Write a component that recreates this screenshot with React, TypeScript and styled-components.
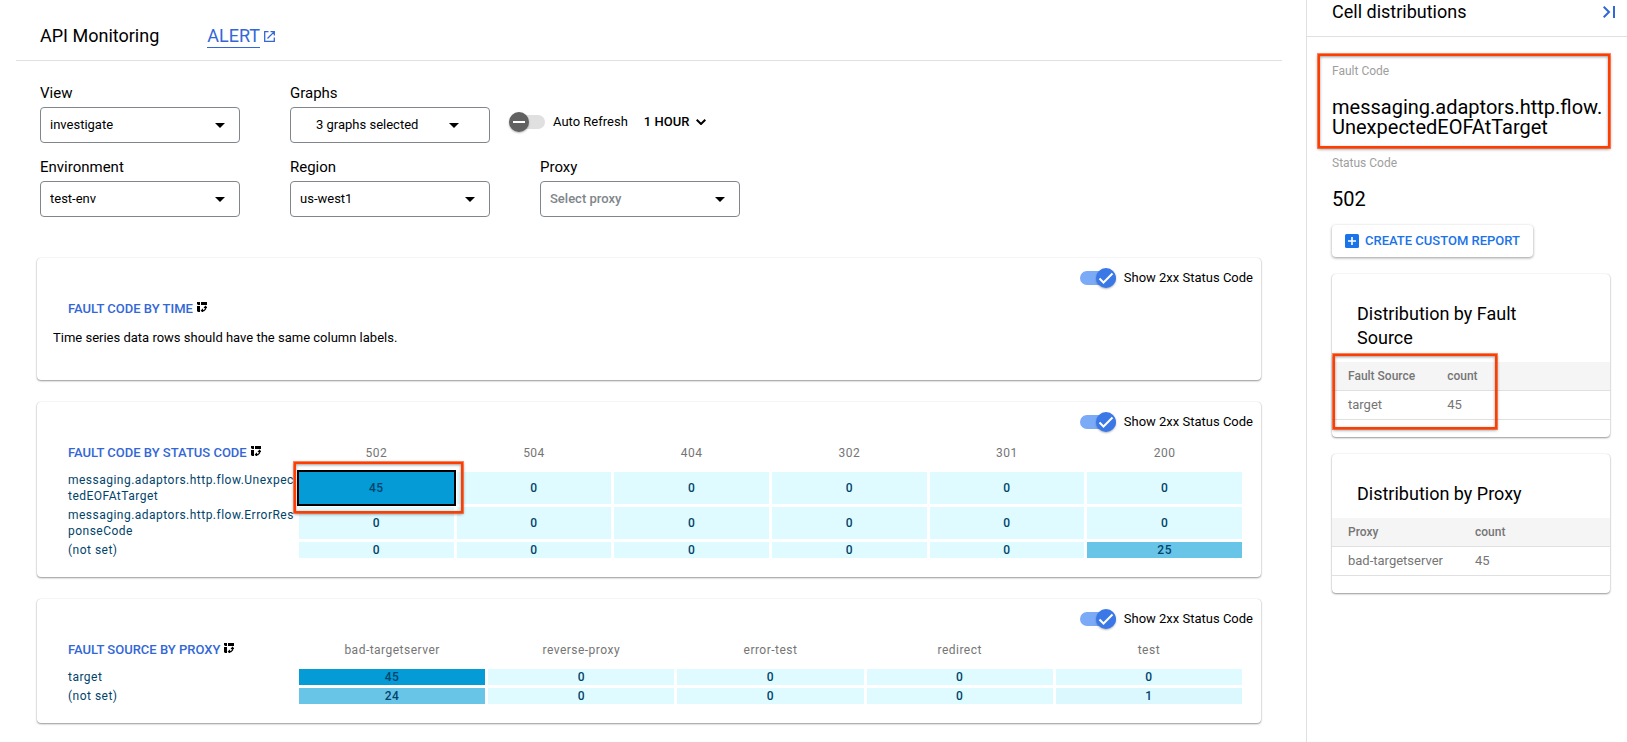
import React, { ReactNode, useId, useState } from "react";
import styled, { createGlobalStyle, css } from "styled-components";

const Global = createGlobalStyle`
  * { box-sizing: border-box; }
  body { margin: 0; background: #fff; color: #000; font: 13px/16px Roboto, sans-serif; }
  button, select, input { font: inherit; color: inherit; }
  table { border-collapse: separate; }
`;

const Page = styled.div`
  display: flex;
  min-height: 100vh;
`;

const Main = styled.main`
  flex: 1;
  min-width: 0;
`;

const Header = styled.header`
  display: flex;
  align-items: center;
  gap: 48px;
  height: 61px;
  margin: 0 24px 0 16px;
  padding: 12px 24px 0;
  border-bottom: 1px solid #e0e0e0;
`;

const Title = styled.h1`
  margin: 0;
  font-size: 18px;
  font-weight: 400;
  line-height: 24px;
`;

const AlertLink = styled.a`
  display: flex;
  align-items: center;
  gap: 4px;
  color: #3367d6;
  font-size: 18px;
  line-height: 22px;
  text-decoration: none;
  span { border-bottom: 1px solid currentColor; }
`;

const Filters = styled.form`
  display: grid;
  gap: 14px;
  padding: 22px 40px 0;
`;

const FilterRow = styled.div`
  display: flex;
  gap: 50px;
`;

const Field = styled.div`
  display: grid;
  width: 200px;
  label { font-size: 15px; line-height: 20px; padding-bottom: 4px; }
`;

const SelectBox = styled.div`
  display: grid;
  align-items: center;
  > * { grid-area: 1 / 1; }
  svg { justify-self: end; margin-right: 15px; pointer-events: none; }
`;

const Select = styled.select<{ $muted?: boolean; $inset?: boolean }>`
  appearance: none;
  width: 100%;
  height: 36px;
  padding: 0 ${(p) => (p.$inset ? 25 : 9)}px;
  border: 1px solid #80868b;
  border-radius: 4px;
  background: #fff;
  color: ${(p) => (p.$muted ? "#80868b" : "#000")};
  font-weight: ${(p) => (p.$muted ? 500 : 400)};
  ${(p) => p.$inset && css`& + svg { margin-right: 31px; }`}
`;

const Refresh = styled.div`
  display: flex;
  align-items: center;
  align-self: flex-end;
  height: 42px;
  margin-left: -31px;
  gap: 16px;
`;

const HourButton = styled.button`
  display: flex;
  align-items: center;
  gap: 7px;
  padding: 0;
  border: 0;
  background: none;
  font-weight: 500;
`;

const ToggleLabel = styled.label`
  display: flex;
  align-items: center;
  gap: 8px;
`;

const Track = styled.span<{ $on: boolean }>`
  position: relative;
  display: flex;
  align-items: center;
  justify-content: ${(p) => (p.$on ? "flex-end" : "flex-start")};
  width: 36px;
  height: 14px;
  border-radius: 7px;
  background: ${(p) => (p.$on ? "#7baaf7" : "#e0e0e0")};
  input { position: absolute; inset: 0; margin: 0; opacity: 0; }
`;

const Knob = styled.span<{ $on: boolean }>`
  display: grid;
  place-items: center;
  width: 20px;
  height: 20px;
  border-radius: 50%;
  background: ${(p) => (p.$on ? "#3b78e7" : "#616161")};
  box-shadow: 0 1px 2px rgba(0, 0, 0, 0.3);
`;

const Cards = styled.div`
  display: grid;
  gap: 22px;
  padding: 41px 45px 19px 37px;
`;

const Card = styled.section`
  border-radius: 4px;
  background: #fff;
  box-shadow: 0 1px 2px rgba(0, 0, 0, 0.4), 0 0 1px rgba(0, 0, 0, 0.2);
`;

const GraphCard = styled(Card)`
  padding-bottom: 16px;
`;

const CardBar = styled.div`
  display: flex;
  justify-content: flex-end;
  height: 32px;
  padding: 0 8px 4px;
  align-items: flex-end;
`;

const GraphLink = styled.button`
  display: flex;
  align-items: center;
  gap: 4px;
  height: 32px;
  padding: 0;
  border: 0;
  background: none;
  color: #3367d6;
  font-weight: 500;
  white-space: nowrap;
  svg { color: #000; margin-bottom: 4px; }
`;

const EmptyGraph = styled.div`
  padding: 3px 31px 4px;
`;

const Message = styled.p`
  margin: 5px -15px 14px;
`;

const HeatTable = styled.table`
  table-layout: fixed;
  width: calc(100% - 44px);
  margin: 0 16px 0 28px;
  border-spacing: 3px;
  font-size: 12px;
  letter-spacing: 0.04em;
  color: #01446b;
  th, td { padding: 0; }
  thead th { height: 32px; color: #757575; font-weight: 400; }
  thead th:first-child { width: 228px; letter-spacing: normal; font-size: 13px; }
  tbody th { text-align: left; font-weight: 400; overflow-wrap: anywhere; }
`;

const heat = { none: "#e0fbff", trace: "#daf8fd", mid: "#69c5e8", high: "#049bd6" };
type Heat = keyof typeof heat;

const HeatCell = styled.td<{ $heat: Heat; $selected?: boolean }>`
  position: relative;
  z-index: ${(p) => (p.$selected ? 1 : 0)};
  background: ${(p) => heat[p.$heat]};
  outline: ${(p) => (p.$selected ? "2px solid #000" : "none")};
  text-align: center;
  font-weight: 500;
`;

const Highlight = styled.span`
  position: absolute;
  border: 2px solid #ff3d00;
  outline: 1px solid rgba(255, 61, 0, 0.6);
  box-shadow: 0 1px 3px rgba(0, 0, 0, 0.5), inset 0 1px 3px rgba(0, 0, 0, 0.4);
  pointer-events: none;
`;

const CellHighlight = styled(Highlight)`
  inset: -10px -9px -9px -5px;
`;

const TableHighlight = styled(Highlight)`
  inset: -8px auto -9px 1px;
  width: 164px;
`;

const BlockHighlight = styled(Highlight)`
  inset: 1px 0 -3px -14px;
`;

const Side = styled.aside`
  width: 321px;
  border-left: 1px solid #e0e0e0;
`;

const SideHeader = styled.header`
  display: flex;
  justify-content: space-between;
  height: 37px;
  padding: 0 12px 0 25px;
  border-bottom: 1px solid #e0e0e0;
  h2 { margin: 0; font-size: 18px; line-height: 24px; font-weight: 400; }
`;

const IconButton = styled.button`
  display: grid;
  place-items: center;
  height: 24px;
  padding: 0;
  border: 0;
  background: none;
  color: #3367d6;
`;

const SideBody = styled.div`
  padding: 16px 17px 0 25px;
`;

const Fact = styled.dl`
  position: relative;
  margin: 0;
  dt { padding-top: 10px; color: #9e9e9e; font-size: 12px; }
  dd { margin: 0; padding: 18px 0 8px; font-size: 20px; line-height: 20px; overflow-wrap: break-word; }
`;

const ReportButton = styled.button`
  display: flex;
  align-items: center;
  gap: 6px;
  height: 32px;
  margin-top: 8px;
  padding: 0 13px;
  border: 0;
  border-radius: 4px;
  background: #fff;
  box-shadow: 0 1px 3px rgba(0, 0, 0, 0.4);
  color: #1a73e8;
  font-weight: 500;
`;

const DistCard = styled(Card)`
  margin-top: 17px;
  padding: 28px 0 17px;
  h3 { margin: 0 60px 12px 25px; font-size: 18px; line-height: 24px; font-weight: 400; }
`;

const TableFrame = styled.div`
  position: relative;
`;

const DistTable = styled.table`
  width: 100%;
  border-spacing: 0;
  color: #757575;
  th, td { height: 29px; padding: 0 16px; border-bottom: 1px solid #e0e0e0; text-align: left; white-space: nowrap; }
  th { background: #f5f5f5; font-size: 12px; font-weight: 500; }
  th:last-child { width: 100%; }
`;

const Caret = () => (
  <svg width="10" height="5" viewBox="0 0 10 5" fill="currentColor"><path d="M0 0h10L5 5z" /></svg>
);

const OpenIcon = () => (
  <svg width="11" height="11" viewBox="0 0 11 11" fill="none" stroke="currentColor" strokeWidth="1.3">
    <path d="M4.500 .7H.7v9.600h9.600V6.500M6.500 .7h3.800v3.800M10.100 .9L3.500 7.500" />
  </svg>
);

const PivotIcon = () => (
  <svg width="10" height="10" viewBox="0 0 10 10" fill="currentColor">
    <path d="M0 0h3v3H1L0 2zM4 0h6v3H4zM0 4h3v6H1L0 9z" />
    <path d="M4.200 8.600H7L8.600 7V4.300M6 7L4.400 8.600 6 10M7 6l1.600-1.600L10 6" fill="none" stroke="currentColor" strokeWidth="1.100" />
  </svg>
);

function Toggle({ label, initial }: { label: string; initial: boolean }) {
  const [on, setOn] = useState(initial);
  return (
    <ToggleLabel>
      <Track $on={on}>
        <Knob $on={on}>
          <svg width="16" height="16" viewBox="0 0 16 16" fill="none" stroke="#fff" strokeWidth="2">
            {on ? <path d="M1.5 8.5l4 4L14.5 3.500" /> : <path d="M2 8h12" />}
          </svg>
        </Knob>
        <input type="checkbox" role="switch" checked={on} onChange={() => setOn(!on)} />
      </Track>
      {label}
    </ToggleLabel>
  );
}

function Picker(props: { label: string; value: string; muted?: boolean; inset?: boolean }) {
  const id = useId();
  return (
    <Field>
      <label htmlFor={id}>{props.label}</label>
      <SelectBox>
        <Select id={id} $muted={props.muted} $inset={props.inset}>
          <option>{props.value}</option>
        </Select>
        <Caret />
      </SelectBox>
    </Field>
  );
}

function Graph({ children }: { children: ReactNode }) {
  return (
    <GraphCard>
      <CardBar><Toggle label="Show 2xx Status Code" initial /></CardBar>
      {children}
    </GraphCard>
  );
}

const GraphTitle = ({ text }: { text: string }) => (
  <GraphLink type="button">{text}<PivotIcon /></GraphLink>
);

type HeatRow = { name: string; values: number[] };

const level = (n: number): Heat => (n > 40 ? "high" : n > 20 ? "mid" : n > 0 ? "trace" : "none");

function HeatMap(props: { title: string; columns: string[]; rows: HeatRow[]; selected?: boolean }) {
  return (
    <HeatTable>
      <thead>
        <tr>
          <th><GraphTitle text={props.title} /></th>
          {props.columns.map((c) => <th key={c} scope="col">{c}</th>)}
        </tr>
      </thead>
      <tbody>
        {props.rows.map((row, r) => (
          <tr key={row.name}>
            <th scope="row">{row.name}</th>
            {row.values.map((v, c) => {
              const selected = props.selected && r === 0 && c === 0;
              return (
                <HeatCell key={c} $heat={level(v)} $selected={selected}>
                  {v}
                  {selected && <CellHighlight />}
                </HeatCell>
              );
            })}
          </tr>
        ))}
      </tbody>
    </HeatTable>
  );
}

function Distribution(props: { title: string; column: string; name: string; count: number; marked?: boolean }) {
  return (
    <DistCard>
      <h3>{props.title}</h3>
      <TableFrame>
        <DistTable>
          <thead><tr><th>{props.column}</th><th>count</th></tr></thead>
          <tbody><tr><td>{props.name}</td><td>{props.count}</td></tr></tbody>
        </DistTable>
        {props.marked && <TableHighlight />}
      </TableFrame>
    </DistCard>
  );
}

export default function App() {
  return (
    <>
      <Global />
      <Page>
        <Main>
          <Header>
            <Title>API Monitoring</Title>
            <AlertLink href="#alert"><span>ALERT</span><OpenIcon /></AlertLink>
          </Header>
          <Filters>
            <FilterRow>
              <Picker label="View" value="investigate" />
              <Picker label="Graphs" value="3 graphs selected" inset />
              <Refresh>
                <Toggle label="Auto Refresh" initial={false} />
                <HourButton type="button">
                  1 HOUR
                  <svg width="10" height="6" viewBox="0 0 10 6" fill="none" stroke="currentColor" strokeWidth="2"><path d="M.7.7L5 5 9.3.7" /></svg>
                </HourButton>
              </Refresh>
            </FilterRow>
            <FilterRow>
              <Picker label="Environment" value="test-env" />
              <Picker label="Region" value="us-west1" />
              <Picker label="Proxy" value="Select proxy" muted />
            </FilterRow>
          </Filters>
          <Cards>
            <Graph>
              <EmptyGraph>
                <GraphTitle text="FAULT CODE BY TIME" />
                <Message>Time series data rows should have the same column labels.</Message>
              </EmptyGraph>
            </Graph>
            <Graph>
              <HeatMap
                title="FAULT CODE BY STATUS CODE"
                selected
                columns={["502", "504", "404", "302", "301", "200"]}
                rows={[
                  { name: "messaging.adaptors.http.flow.UnexpectedEOFAtTarget", values: [45, 0, 0, 0, 0, 0] },
                  { name: "messaging.adaptors.http.flow.ErrorResponseCode", values: [0, 0, 0, 0, 0, 0] },
                  { name: "(not set)", values: [0, 0, 0, 0, 0, 25] },
                ]}
              />
            </Graph>
            <Graph>
              <HeatMap
                title="FAULT SOURCE BY PROXY"
                columns={["bad-targetserver", "reverse-proxy", "error-test", "redirect", "test"]}
                rows={[
                  { name: "target", values: [45, 0, 0, 0, 0] },
                  { name: "(not set)", values: [24, 0, 0, 0, 1] },
                ]}
              />
            </Graph>
          </Cards>
        </Main>
        <Side>
          <SideHeader>
            <h2>Cell distributions</h2>
            <IconButton type="button" aria-label="Collapse panel">
              <svg width="12" height="12" viewBox="0 0 12 12" fill="none" stroke="currentColor" strokeWidth="2"><path d="M.7.7L6 6 .7 11.300M11 0v12" /></svg>
            </IconButton>
          </SideHeader>
          <SideBody>
            <Fact>
              <dt>Fault Code</dt>
              <dd>messaging.adaptors.http.flow.<wbr />UnexpectedEOFAtTarget</dd>
              <BlockHighlight />
            </Fact>
            <Fact>
              <dt>Status Code</dt>
              <dd>502</dd>
            </Fact>
            <ReportButton type="button">
              <svg width="14" height="14" viewBox="0 0 14 14"><rect width="14" height="14" rx="1.500" fill="currentColor" /><path d="M7 3v8M3 7h8" stroke="#fff" strokeWidth="1.600" /></svg>
              CREATE CUSTOM REPORT
            </ReportButton>
            <Distribution title="Distribution by Fault Source" column="Fault Source" name="target" count={45} marked />
            <Distribution title="Distribution by Proxy" column="Proxy" name="bad-targetserver" count={45} />
          </SideBody>
        </Side>
      </Page>
    </>
  );
}
